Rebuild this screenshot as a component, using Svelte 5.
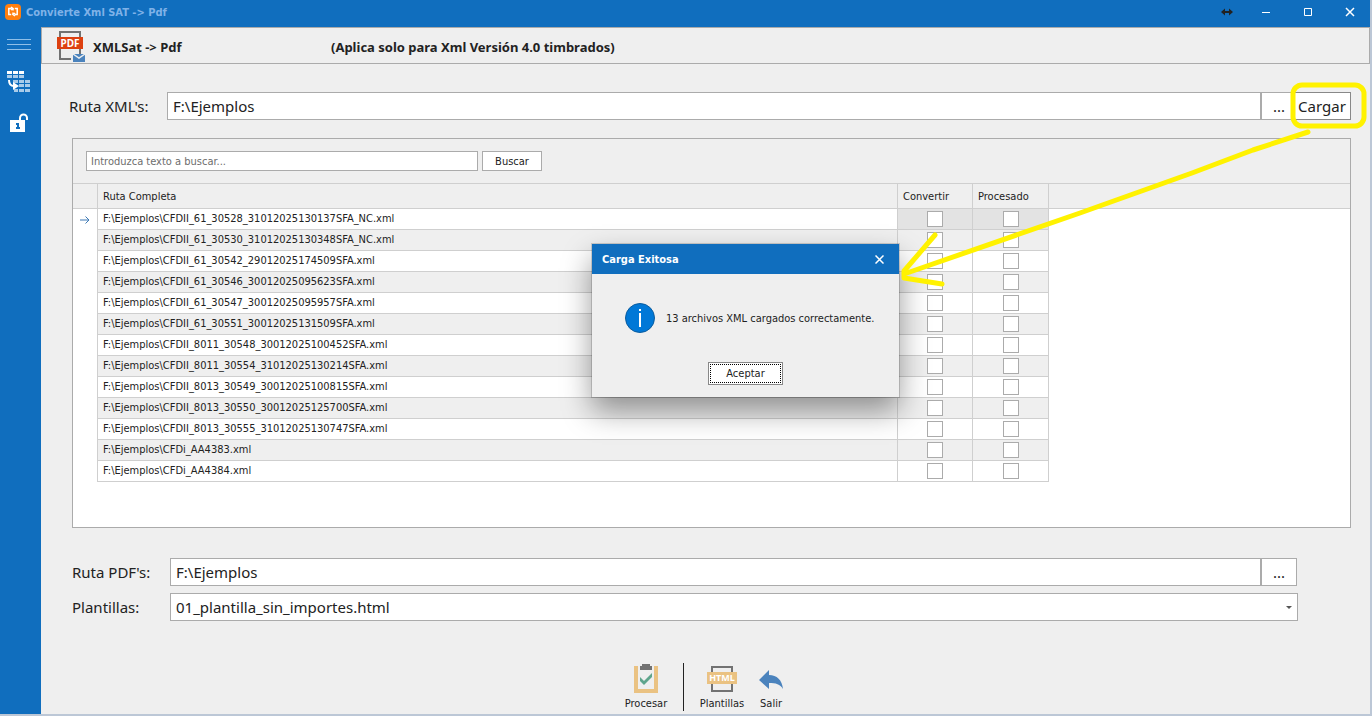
<script lang="ts">
	interface XmlRow {
		path: string;
		convertir: boolean;
		procesado: boolean;
	}

	const files = [
		'CFDII_61_30528_31012025130137SFA_NC.xml',
		'CFDII_61_30530_31012025130348SFA_NC.xml',
		'CFDII_61_30542_29012025174509SFA.xml',
		'CFDII_61_30546_30012025095623SFA.xml',
		'CFDII_61_30547_30012025095957SFA.xml',
		'CFDII_61_30551_30012025131509SFA.xml',
		'CFDII_8011_30548_30012025100452SFA.xml',
		'CFDII_8011_30554_31012025130214SFA.xml',
		'CFDII_8013_30549_30012025100815SFA.xml',
		'CFDII_8013_30550_30012025125700SFA.xml',
		'CFDII_8013_30555_31012025130747SFA.xml',
		'CFDi_AA4383.xml',
		'CFDi_AA4384.xml'
	];

	let rutaXml = $state('F:\\Ejemplos');
	let rutaPdf = $state('F:\\Ejemplos');
	let plantilla = $state('01_plantilla_sin_importes.html');
	let busqueda = $state('');
	let selected = $state(0);
	let dialogOpen = $state(true);
	let rows: XmlRow[] = $state(
		files.map((f) => ({ path: 'F:\\Ejemplos\\' + f, convertir: false, procesado: false }))
	);

	let visible = $derived(
		rows.filter((r) => r.path.toLowerCase().includes(busqueda.toLowerCase()))
	);
</script>

<div class="window">
	<header class="titlebar">
		<svg class="app-icon" width="16" height="16" viewBox="0 0 16 16" aria-hidden="true">
			<rect width="16" height="16" rx="4" fill="#ff7f0e" />
			<path
				d="M6.500 4.500H3.800v6h2.400M9.500 10.500h2.700v-6H9.800M6 3l2 1.500L6 6M10 9l-2 1.500L10 12M8 4.500v2M8 8.500v2"
				fill="none"
				stroke="#fff"
				stroke-width="1.5"
			/>
		</svg>
		<span class="title">Convierte Xml SAT -&gt; Pdf</span>
		<svg class="resize" width="12" height="8" viewBox="0 0 12 8" aria-hidden="true">
			<path d="M0 4l4-3.500v2.500h4V.5L12 4 8 7.500V5H4v2.500z" fill="#222" />
		</svg>
		<button class="win-btn" aria-label="Minimizar">
			<svg width="10" height="10" viewBox="0 0 10 10"><path d="M1 5.500h8" /></svg>
		</button>
		<button class="win-btn" aria-label="Maximizar">
			<svg width="10" height="10" viewBox="0 0 10 10"><path d="M1.500 1.500h7v7h-7z" /></svg>
		</button>
		<button class="win-btn" aria-label="Cerrar">
			<svg width="10" height="10" viewBox="0 0 10 10"><path d="M1 1l8 8M9 1L1 9" /></svg>
		</button>
	</header>

	<div class="body">
		<nav class="sidebar">
			<button aria-label="Menú">
				<svg width="24" height="12" viewBox="0 0 24 12">
					<path d="M0 .5h24M0 5.500h24M0 10.500h24" stroke="#8fbfe8" />
				</svg>
			</button>
			<button aria-label="Convertir">
				<svg width="24" height="24" viewBox="0 0 24 24">
					<path d="M0 1h5v3H0zM6 1h5v3H6zM12 1h5v3h-5z" fill="#fff" />
					<path
						d="M0 5h5v3H0zM6 5h5v3H6zM12 5h5v3h-5zM6 10h5v3H6zM12 10h5v3h-5zM18 10h5v3h-5zM12 14h5v3h-5zM18 14h5v3h-5zM7 19h4v3H7zM12 19h5v3h-5zM18 19h5v3h-5z"
						fill="#a9cbe9"
					/>
					<path d="M2 10c0 4 2 6 5 6" fill="none" stroke="#fff" stroke-width="2" />
					<path d="M6 12l6 4-6 4z" fill="#fff" />
				</svg>
			</button>
			<button aria-label="Licencia">
				<svg width="18" height="20" viewBox="0 0 18 20">
					<path d="M0 7h15v12H0z" fill="#fff" />
					<path d="M10 7V5a3.500 3.500 0 0 1 7 0v2" fill="none" stroke="#fff" stroke-width="2" />
					<path d="M6 10h3v4h1v2H6v-2h1v-2H6z" fill="#106ebe" />
				</svg>
			</button>
		</nav>

		<main>
			<div class="page-head">
				<svg width="30" height="32" viewBox="0 0 30 32" aria-hidden="true">
					<path d="M3 7V1h20v22M3 18v10h11" fill="none" stroke="#727272" stroke-width="2" />
					<rect y="6" width="26" height="12" fill="#dd4010" />
					<text x="13" y="16" class="pdf-text">PDF</text>
					<path d="M16 23h12v8H16z" fill="#4b83bd" />
					<path d="M16 23l6 4 6-4" fill="none" stroke="#efefef" stroke-width="1.500" />
				</svg>
				<h1>XMLSat -&gt; Pdf</h1>
				<strong>(Aplica solo para Xml Versión 4.0 timbrados)</strong>
			</div>

			<div class="content">
				<div class="field">
					<label for="ruta-xml">Ruta XML's:</label>
					<input id="ruta-xml" type="text" bind:value={rutaXml} />
					<button class="browse" aria-label="Examinar XML">...</button>
					<button class="load" onclick={() => (dialogOpen = true)}>Cargar</button>
				</div>

				<section class="grid-panel">
					<div class="search">
						<input
							type="text"
							aria-label="Texto a buscar"
							placeholder="Introduzca texto a buscar..."
							bind:value={busqueda}
						/>
						<button>Buscar</button>
					</div>
					<table>
						<colgroup>
							<col class="c-mark" />
							<col class="c-path" />
							<col class="c-check" />
							<col class="c-done" />
							<col />
						</colgroup>
						<thead>
							<tr>
								<th></th>
								<th>Ruta Completa</th>
								<th>Convertir</th>
								<th>Procesado</th>
								<th></th>
							</tr>
						</thead>
						<tbody>
							{#each visible as row, i (row.path)}
								<tr class:selected={i === selected} onclick={() => (selected = i)}>
									<td class="mark">
										{#if i === selected}
											<svg width="10" height="8" viewBox="0 0 10 8">
												<path d="M0 4h9M5.500.5L9 4 5.500 7.500" fill="none" stroke="#3c78b4" />
											</svg>
										{/if}
									</td>
									<td>{row.path}</td>
									<td class="check">
										<input type="checkbox" aria-label="Convertir" bind:checked={row.convertir} />
									</td>
									<td class="check">
										<input type="checkbox" aria-label="Procesado" bind:checked={row.procesado} />
									</td>
									<td class="rest"></td>
								</tr>
							{/each}
						</tbody>
					</table>
				</section>

				<div class="output">
					<div class="field">
						<label for="ruta-pdf">Ruta PDF's:</label>
						<input id="ruta-pdf" type="text" bind:value={rutaPdf} />
						<button class="browse" aria-label="Examinar PDF">...</button>
					</div>
					<div class="field">
						<label for="plantilla">Plantillas:</label>
						<div class="combo">
							<select id="plantilla" bind:value={plantilla}>
								<option>01_plantilla_sin_importes.html</option>
							</select>
							<svg width="6" height="3" viewBox="0 0 6 3"><path d="M0 0h6L3 3z" fill="#555" /></svg>
						</div>
					</div>
				</div>
			</div>

			<footer class="actions">
				<button>
					<svg width="32" height="32" viewBox="0 0 32 32">
						<path d="M4 3h24v27H4z" fill="#eac282" />
						<path d="M8 3h16v23H8z" fill="#efefef" />
						<path d="M10 3h2V1h8v2h2v4H10z" fill="#727272" />
						<path d="M10 14l4 4 8-8v4l-8 8-4-4z" fill="#5fa58c" />
					</svg>
					Procesar
				</button>
				<hr />
				<button>
					<svg width="32" height="32" viewBox="0 0 32 32">
						<path d="M6 9V4h20v5M6 21v7h20v-7" fill="none" stroke="#727272" stroke-width="2" />
						<rect x="1" y="9" width="30" height="12" fill="#eac282" />
						<text x="16" y="18" class="html-text">HTML</text>
					</svg>
					Plantillas
				</button>
				<button>
					<svg width="32" height="32" viewBox="0 0 32 32">
						<path d="M4 17L14 7v5c8 0 13 5 14 14-3-5-7-6-14-6v6z" fill="#4b83bd" />
					</svg>
					Salir
				</button>
			</footer>
		</main>
	</div>

	{#if dialogOpen}
		<div class="dialog" role="alertdialog" aria-labelledby="dlg-title" aria-describedby="dlg-text">
			<div class="dialog-head">
				<h2 id="dlg-title">Carga Exitosa</h2>
				<button aria-label="Cerrar aviso" onclick={() => (dialogOpen = false)}>
					<svg width="9" height="9" viewBox="0 0 9 9"><path d="M.5.5l8 8M8.500.5l-8 8" /></svg>
				</button>
			</div>
			<div class="dialog-body">
				<svg width="30" height="30" viewBox="0 0 30 30" aria-hidden="true">
					<circle cx="15" cy="15" r="14.500" fill="#0078d7" stroke="#0b5c9e" />
					<path d="M14 6h2v2h-2zM14 10h2v14h-2z" fill="#fff" />
				</svg>
				<p id="dlg-text">13 archivos XML cargados correctamente.</p>
			</div>
			<button class="accept" onclick={() => (dialogOpen = false)}>Aceptar</button>
		</div>

		<svg class="marker" width="480" height="220" viewBox="0 0 480 220" aria-hidden="true">
			<rect x="401" y="15" width="71" height="41" rx="9" />
			<path d="M416 62L361 80 300 103 188 143 12 204M43 165L12 201V208L50 214" />
		</svg>
	{/if}
</div>

<style>
	:global(body) {
		margin: 0;
		background: #c3ccd8;
	}

	.window {
		position: relative;
		box-sizing: border-box;
		min-height: 100vh;
		display: flex;
		flex-direction: column;
		border: 0 solid #bcc7d6;
		border-width: 0 2px 2px 0;
		background: #efefef;
		color: #222;
		font-family: 'DejaVu Sans Condensed', 'DejaVu Sans', sans-serif;
		font-size: 11px;
	}

	.window * {
		box-sizing: border-box;
	}

	button,
	input,
	select {
		font: inherit;
		color: inherit;
		margin: 0;
		border-radius: 0;
	}

	button {
		padding: 0;
	}

	.titlebar {
		display: flex;
		align-items: center;
		height: 27px;
		padding: 0 0 3px 5px;
		background: #106ebe;
	}

	.title {
		flex: 1;
		margin-left: 5px;
		color: #7fb2e8;
		font-weight: 700;
	}

	.resize {
		margin-right: 12px;
	}

	.win-btn {
		width: 42px;
		height: 24px;
		display: grid;
		place-items: center;
		border: 0;
		background: none;
	}

	.win-btn:last-child {
		margin-right: -1px;
	}

	.win-btn path,
	.dialog-head path {
		fill: none;
		stroke: #fff;
	}

	.win-btn:last-child path,
	.dialog-head path {
		stroke-width: 1.5;
	}

	.body {
		flex: 1;
		display: flex;
	}

	.sidebar {
		width: 41px;
		display: flex;
		flex-direction: column;
		align-items: flex-start;
		gap: 19px;
		padding: 12px 0 0 7px;
		background: #106ebe;
	}

	.sidebar button {
		display: flex;
		border: 0;
		background: none;
	}

	.sidebar button:last-child {
		margin-left: 3px;
	}

	main {
		flex: 1;
		display: flex;
		flex-direction: column;
	}

	.page-head,
	.field {
		font-family: 'Noto Sans', 'Open Sans', sans-serif;
	}

	.page-head {
		display: flex;
		align-items: center;
		height: 37px;
		padding: 2px 0 0 15px;
		border: 1px solid #ababab;
	}

	.page-head h1,
	.page-head strong {
		margin: 0;
		font-size: 13px;
		font-weight: 700;
	}

	.page-head h1 {
		width: 244px;
		padding-left: 6px;
	}

	.pdf-text,
	.html-text {
		font-family: 'Noto Sans', 'Open Sans', sans-serif;
		font-size: 10px;
		font-weight: 700;
		fill: #fff;
		text-anchor: middle;
	}

	.html-text {
		font-size: 9px;
	}

	.content {
		padding: 28px 19px 0 28px;
	}

	.field {
		display: flex;
		align-items: center;
		height: 28px;
		font-size: 15px;
	}

	.field label {
		width: 98px;
	}

	.field > input,
	.field select {
		flex: 1;
		min-width: 0;
		height: 28px;
		padding: 0 5px;
		border: 1px solid #ababab;
		background: #fff;
		outline: none;
	}

	.browse {
		width: 36px;
		height: 28px;
		border: 1px solid #ababab;
		background: #fff;
	}

	.load {
		width: 58px;
		height: 28px;
		margin-left: -4px;
		border: 1px solid #888;
		background: #fff;
	}

	.grid-panel {
		min-height: 390px;
		margin: 18px 0 30px 3px;
		border: 1px solid #ababab;
		background: #fff;
	}

	.search {
		display: flex;
		gap: 4px;
		padding: 12px 13px;
		background: #efefef;
	}

	.search input {
		width: 392px;
		height: 20px;
		padding: 0 4px;
		border: 1px solid #ababab;
	}

	.search input::placeholder {
		color: #6d6d6d;
	}

	.search button {
		width: 60px;
		height: 20px;
		border: 1px solid #ababab;
		background: #fff;
	}

	table {
		width: 100%;
		table-layout: fixed;
		border-collapse: separate;
		border-spacing: 0;
	}

	.c-mark {
		width: 25px;
	}

	.c-path {
		width: 800px;
	}

	.c-check {
		width: 75px;
	}

	.c-done {
		width: 76px;
	}

	th {
		height: 26px;
		padding: 0 5px;
		border: 0 solid #cfcfcf;
		border-width: 1px 1px 1px 0;
		background: #efefef;
		font-weight: 400;
		text-align: left;
	}

	th:last-child {
		border-right: 0;
	}

	td {
		height: 21px;
		padding: 0 5px;
		border: 0 solid #cfcfcf;
		border-width: 0 1px 1px 0;
		line-height: 20px;
		white-space: nowrap;
	}

	tr:nth-child(even) td {
		background: #efefef;
	}

	tr.selected .check {
		background: #e3e3e3;
	}

	tbody tr td.mark,
	tbody tr td.rest {
		border-bottom: 0;
		background: #fff;
	}

	td.rest {
		border-right: 0;
	}

	.mark svg {
		display: block;
		margin: 0 auto;
	}

	.check input {
		display: block;
		width: 16px;
		height: 16px;
		margin: 0 auto;
		appearance: none;
		border: 1px solid #ababab;
		background: #fff;
	}

	.check input:checked {
		background: #106ebe;
	}

	.output {
		display: grid;
		gap: 7px;
		padding: 0 54px 0 3px;
	}

	.combo {
		position: relative;
		flex: 1;
		display: flex;
		margin-right: -1px;
	}

	.combo select {
		appearance: none;
	}

	.combo svg {
		position: absolute;
		right: 6px;
		top: 13px;
		pointer-events: none;
	}

	.actions {
		display: flex;
		justify-content: center;
		margin: auto 0 1px;
		padding: 20px 0 0 6px;
	}

	.actions button {
		display: flex;
		flex-direction: column;
		align-items: center;
		width: 49px;
		border: 0;
		background: none;
		line-height: 18px;
	}

	.actions hr {
		width: 1px;
		height: 48px;
		margin: 0 14px 0 12px;
		border: 0;
		background: #222;
	}

	.dialog {
		position: absolute;
		top: 244px;
		right: 471px;
		width: 307px;
		display: flex;
		flex-direction: column;
		padding-bottom: 12px;
		background: #efefef;
		box-shadow:
			0 0 0 1px rgba(0, 0, 0, 0.15),
			0 14px 28px rgba(0, 0, 0, 0.4);
	}

	.dialog-head {
		display: flex;
		align-items: center;
		justify-content: space-between;
		height: 30px;
		padding: 0 15px 0 10px;
		background: #106ebe;
		color: #fff;
	}

	.dialog-head h2 {
		margin: 0;
		font-size: 11px;
		font-weight: 700;
	}

	.dialog-head button {
		display: flex;
		border: 0;
		background: none;
	}

	.dialog-body {
		display: flex;
		align-items: center;
		gap: 11px;
		padding: 29px 33px;
	}

	.dialog-body svg {
		flex: none;
	}

	.dialog-body p {
		margin: 0;
		white-space: nowrap;
	}

	.accept {
		align-self: center;
		width: 75px;
		height: 23px;
		border: 1px solid #888;
		background: #fff;
		outline: 1px dotted #000;
		outline-offset: -3px;
	}

	.marker {
		position: absolute;
		top: 70px;
		right: -2px;
		fill: none;
		stroke: #fff200;
		stroke-width: 5;
		stroke-linecap: round;
		stroke-linejoin: round;
		pointer-events: none;
	}
</style>
